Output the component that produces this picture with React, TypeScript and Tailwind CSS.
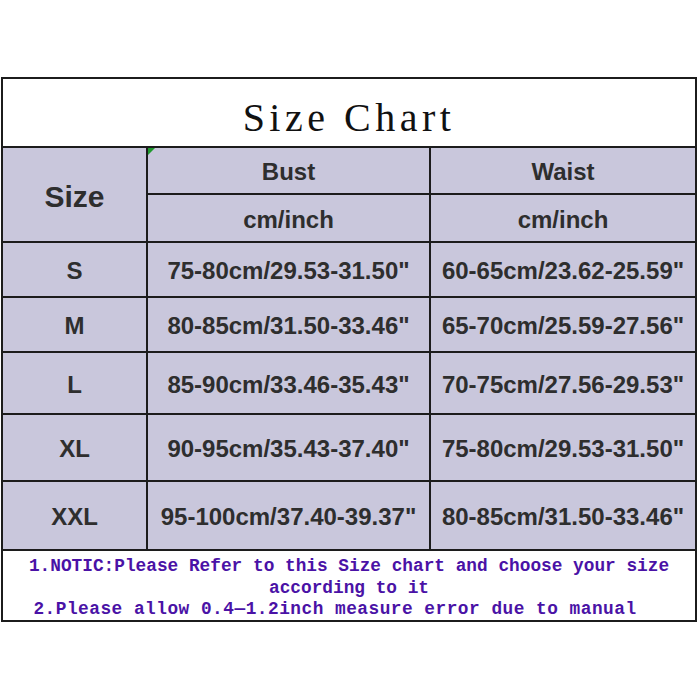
import React from "react";

const rows = [
  { size: "S", bust: '75-80cm/29.53-31.50"', waist: '60-65cm/23.62-25.59"', h: "h-[53px]" },
  { size: "M", bust: '80-85cm/31.50-33.46"', waist: '65-70cm/25.59-27.56"', h: "h-[53px]" },
  { size: "L", bust: '85-90cm/33.46-35.43"', waist: '70-75cm/27.56-29.53"', h: "h-[60px]" },
  { size: "XL", bust: '90-95cm/35.43-37.40"', waist: '75-80cm/29.53-31.50"', h: "h-[65px]" },
  { size: "XXL", bust: '95-100cm/37.40-39.37"', waist: '80-85cm/31.50-33.46"', h: "h-[67px]" },
];

const cell =
  "bg-[#c9c7dc] flex items-center justify-center pt-[3px] text-[24px] font-bold text-[#2e2e2e] font-['Liberation_Sans',Arial,sans-serif]";

export default function App() {
  return (
    <div className="w-[700px] h-[700px] bg-white pt-[77px] pl-[1px]">
      <div className="w-[696px] bg-[#1c1c1c] p-[2px] grid grid-cols-[143px_281px_264px] gap-[2px]">
        <div className="col-span-3 h-[67px] bg-white flex items-center justify-center pt-[10px]">
          <span className="text-[40px] tracking-[4.5px] text-[#111] font-['Liberation_Serif','Times_New_Roman',serif]">
            Size Chart
          </span>
        </div>

        <div className={`${cell} row-span-2 text-[30px]`}>Size</div>
        <div className={`${cell} h-[45px] relative`}>
          <span className="absolute left-0 top-0 w-0 h-0 border-t-[7px] border-t-[#1f9a2e] border-r-[7px] border-r-transparent" />
          Bust
        </div>
        <div className={`${cell} h-[45px]`}>Waist</div>
        <div className={`${cell} h-[46px]`}>cm/inch</div>
        <div className={`${cell} h-[46px]`}>cm/inch</div>

        {rows.map((r) => (
          <React.Fragment key={r.size}>
            <div className={`${cell} ${r.h}`}>{r.size}</div>
            <div className={`${cell} ${r.h}`}>{r.bust}</div>
            <div className={`${cell} ${r.h}`}>{r.waist}</div>
          </React.Fragment>
        ))}

        <div className="col-span-3 h-[69px] bg-white flex flex-col justify-center pt-[6px] text-center text-[17.8px] leading-[21.5px] font-bold text-[#4a12a6] font-['Liberation_Mono','Courier_New',monospace]">
          <p>1.NOTIC:Please Refer to this Size chart and choose your size according to it</p>
          <p className="pr-[28px] tracking-[0.5px]">2.Please allow 0.4—1.2inch measure error due to manual</p>
        </div>
      </div>
    </div>
  );
}
